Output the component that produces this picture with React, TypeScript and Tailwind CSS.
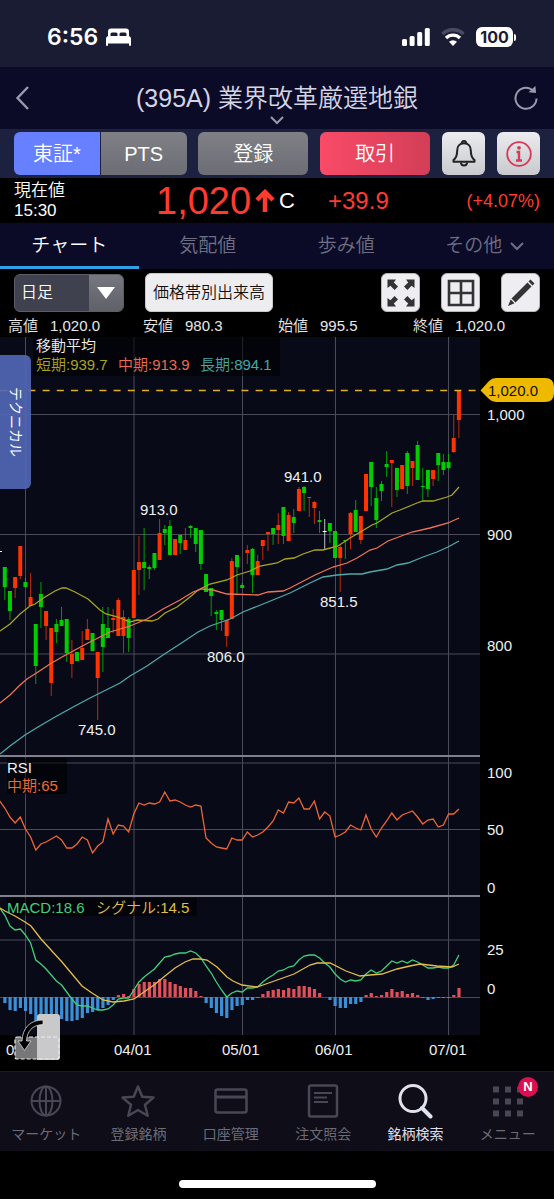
import { ReactNode } from 'react';

type Candle = [
  color: 'r' | 'g' | 'w',
  top: number,
  bottom: number,
  high: number,
  low: number,
];

const candleColors = { r: '#ff3300', g: '#00cc00', w: '#ffffff' };

const candles: Candle[] = [
  ['g', 567, 587, 567, 600],
  ['g', 591, 611, 591, 620],
  ['r', 577, 588, 577, 598],
  ['r', 546, 576, 546, 579],
  ['g', 582, 587, 578, 587],
  ['r', 597, 606, 573, 606],
  ['g', 624, 666, 624, 684],
  ['g', 594, 607, 582, 628],
  ['r', 611, 626, 611, 640],
  ['r', 628, 683, 628, 696],
  ['g', 624, 632, 619, 643],
  ['g', 620, 626, 607, 626],
  ['g', 619, 653, 619, 662],
  ['r', 654, 664, 640, 678],
  ['g', 652, 661, 652, 661],
  ['r', 648, 660, 631, 660],
  ['r', 629, 640, 619, 640],
  ['g', 633, 651, 633, 651],
  ['r', 652, 678, 652, 720],
  ['g', 624, 647, 607, 672],
  ['g', 628, 638, 607, 638],
  ['r', 618, 620, 609, 633],
  ['r', 600, 636, 598, 636],
  ['r', 617, 636, 610, 653],
  ['g', 619, 638, 617, 652],
  ['r', 570, 618, 570, 618],
  ['r', 562, 570, 536, 595],
  ['g', 562, 568, 528, 590],
  ['g', 567, 569, 565, 579],
  ['g', 553, 568, 553, 570],
  ['r', 533, 560, 519, 560],
  ['g', 529, 533, 525, 545],
  ['g', 526, 555, 520, 555],
  ['r', 539, 555, 539, 555],
  ['g', 535, 543, 535, 554],
  ['r', 540, 550, 528, 550],
  ['g', 526, 528, 525, 538],
  ['g', 528, 544, 528, 552],
  ['g', 530, 564, 530, 570],
  ['g', 574, 592, 574, 592],
  ['g', 588, 596, 588, 616],
  ['g', 612, 614, 610, 630],
  ['g', 610, 620, 610, 631],
  ['r', 620, 636, 620, 647],
  ['r', 561, 619, 558, 619],
  ['g', 555, 567, 555, 594],
  ['g', 585, 588, 583, 588],
  ['r', 550, 553, 545, 564],
  ['g', 549, 575, 548, 593],
  ['r', 561, 575, 555, 575],
  ['r', 540, 546, 540, 560],
  ['r', 532, 534, 532, 551],
  ['g', 528, 534, 528, 545],
  ['r', 525, 530, 513, 544],
  ['g', 507, 536, 507, 544],
  ['r', 515, 541, 512, 541],
  ['g', 517, 523, 509, 533],
  ['r', 489, 511, 487, 511],
  ['g', 487, 493, 486, 511],
  ['r', 497, 498, 497, 517],
  ['r', 502, 508, 501, 524],
  ['g', 520, 522, 511, 533],
  ['w', 531, 532, 519, 549],
  ['g', 523, 531, 523, 543],
  ['g', 531, 558, 531, 558],
  ['r', 547, 558, 545, 592],
  ['g', 540, 541, 540, 559],
  ['r', 513, 534, 512, 549],
  ['g', 510, 532, 500, 532],
  ['r', 516, 540, 516, 544],
  ['r', 474, 511, 474, 511],
  ['g', 462, 487, 462, 506],
  ['g', 498, 520, 487, 528],
  ['g', 484, 491, 481, 501],
  ['g', 464, 467, 451, 477],
  ['r', 460, 463, 460, 507],
  ['g', 468, 490, 468, 497],
  ['r', 465, 489, 465, 489],
  ['g', 453, 486, 451, 494],
  ['r', 461, 468, 461, 486],
  ['g', 445, 480, 441, 480],
  ['g', 486, 487, 468, 501],
  ['g', 470, 489, 470, 497],
  ['r', 470, 479, 470, 486],
  ['g', 453, 465, 453, 481],
  ['g', 462, 470, 454, 475],
  ['g', 462, 468, 454, 469],
  ['r', 438, 452, 415, 453],
  ['r', 390, 420, 390, 438],
];

// the first value of the two daily series lies one day left of the first candle
const rsi = [
  801, 808, 817, 823, 817, 829, 837, 850, 844, 842, 839, 836, 840, 848, 848,
  844, 837, 840, 853, 846, 842, 819, 834, 825, 826, 832, 814, 803, 805, 803,
  804, 802, 792, 801, 800, 802, 805, 807, 805, 806, 838, 843, 847, 848, 849,
  838, 840, 840, 832, 837, 835, 832, 827, 821, 810, 813, 802, 803, 798, 809,
  809, 801, 819, 812, 816, 837, 835, 832, 825, 828, 830, 815, 829, 837, 828,
  821, 813, 820, 815, 813, 811, 817, 824, 820, 819, 827, 825, 814, 814, 809,
];

const macd = [
  908, 915, 926, 930, 929, 935, 943, 960, 964, 969, 975, 981, 985, 992, 999,
  1005, 1006, 1006, 1008, 1010, 1010, 1009, 1005, 999, 998, 998, 990, 982, 977,
  973, 969, 963, 957, 956, 954, 953, 953, 951, 953, 958, 966, 973, 982, 990,
  997, 993, 991, 992, 988, 988, 987, 982, 978, 975, 971, 970, 967, 966, 960,
  956, 955, 955, 958, 963, 967, 974, 979, 982, 980, 981, 980, 974, 970, 973,
  971, 966, 961, 963, 961, 963, 960, 962, 965, 968, 968, 967, 968, 968, 965,
  955,
];

const histogram = [
  -6, -13, -14, -11, -14, -17, -24, -24, -24, -24, -23, -22, -24, -24, -23, -21,
  -16, -15, -13, -11, -8, -3, 2, 3, 1, 8, 13, 15, 15, 15, 18, 18, 15, 13, 11, 9,
  9, 6, 1, -6, -11, -16, -19, -21, -13, -9, -8, -3, -3, -1, 3, 6, 7, 8, 7, 9, 8,
  11, 11, 10, 8, 4, 0, -3, -9, -11, -11, -7, -7, -5, 2, 4, 1, 2, 5, 8, 5, 6, 3,
  4, 2, -1, -3, -2, -1, -1, -1, 2, 9,
];

const shortAverage =
  '0,631 10,624 20,614 30,606 35,604 45,597 55,591 62,588 66,588 75,592 88,599 100,610 106,614 118,617 130,622 137,620 152,621 158,619 165,613 177,607 190,597 198,590 210,584 227,580 237,575 250,571 260,566 277,563 285,559 294,558 303,554 315,550 323,550 338,546 350,538 362,531 372,525 377,523 392,513 400,510 417,503 423,501 433,501 447,497 452,495 459,487';
const middleAverage =
  '0,703 10,695 20,685 27,679 38,672 50,664 62,657 75,650 88,643 100,637 110,632 120,629 130,626 147,619 163,609 180,600 193,592 202,589 213,590 227,594 258,595 268,592 283,591 290,588 315,575 333,567 347,563 357,558 370,550 377,548 388,541 412,532 430,528 448,523 459,518';
const longAverage =
  '0,754 10,746 25,735 38,727 55,717 75,706 90,698 104,691 120,683 130,676 147,666 163,655 183,642 198,632 210,626 230,619 243,612 263,604 290,593 310,583 323,577 337,575 350,574 362,574 370,572 387,569 397,565 408,563 423,557 437,552 448,547 459,541';
const signal =
  '0,908 5,911 15,916 25,922 31,926 41,939 51,950 62,962 72,974 82,986 92,993 103,1000 113,1002 124,1001 134,999 144,992 154,985 165,976 175,968 185,962 193,959 200,959 207,960 217,967 227,977 233,981 242,985 257,987 263,985 280,979 294,974 310,965 317,963 330,963 346,971 360,976 370,975 382,974 397,969 410,966 420,964 437,966 452,967 459,964';

const candleX = (index: number) => 4.8 + index * 5.16;
const toPoints = (values: number[]) =>
  values.map((y, index) => `${candleX(index - 1)},${y}`).join(' ');

const StatusBar = () => (
  <div className="flex items-center justify-between h-[67px] pt-[7px] pl-[47px] pr-[38px] bg-[#191c33] text-white">
    <div className="flex items-center gap-2">
      <span className="font-['Inter',sans-serif] font-semibold text-[23px] leading-7">
        6:56
      </span>
      <svg width="25" height="18" viewBox="0 0 25 18" fill="currentColor">
        <path d="M2 8V3.5A3 3 0 0 1 5 .5h15a3 3 0 0 1 3 3V8h-2.500V6A1.500 1.500 0 0 0 19 4.500h-4A1.500 1.500 0 0 0 13.500 6v2h-2V6A1.500 1.500 0 0 0 10 4.500H6A1.500 1.500 0 0 0 4.500 6v2Z" />
        <path d="M0 11a3 3 0 0 1 3-3h19a3 3 0 0 1 3 3v6a1 1 0 0 1-2 0v-1.500H2V17a1 1 0 0 1-2 0Z" />
      </svg>
    </div>
    <div className="flex items-center gap-[11px]">
      <svg width="28" height="18" viewBox="0 0 28 18" fill="currentColor">
        <rect x="0" y="11" width="5" height="7" rx="1.500" />
        <rect x="7.600" y="8" width="5" height="10" rx="1.500" />
        <rect x="15.200" y="4" width="5" height="14" rx="1.500" />
        <rect x="22.800" y="0" width="5" height="18" rx="1.500" />
      </svg>
      <svg width="24" height="18" viewBox="0 0 24 18" fill="none">
        <path d="M1.500 6a15 15 0 0 1 21 0" stroke="#474a60" strokeWidth="3.600" />
        <path d="M5 10a10 10 0 0 1 14 0" stroke="#fff" strokeWidth="3.400" />
        <path d="M12 18 8 13.800a5.800 5.800 0 0 1 8 0Z" fill="#fff" />
      </svg>
      <div className="flex items-center gap-px">
        <span className="w-[37px] h-5 rounded-md bg-white text-center text-[#191c33] font-['Inter',sans-serif] font-bold text-[16px] leading-5">
          100
        </span>
        <span className="w-0.5 h-[7px] rounded-r-sm bg-white" />
      </div>
    </div>
  </div>
);

const Header = () => (
  <header className="flex items-start justify-between h-[62px] px-[15px] bg-[#0b0b28] text-[#9a9aac]">
    <button type="button" aria-label="戻る" className="w-[26px] pt-[18px]">
      <svg width="15" height="26" viewBox="0 0 15 26" fill="none">
        <path d="M13 2 2.500 13 13 24" stroke="currentColor" strokeWidth="2.400" />
      </svg>
    </button>
    <button type="button" className="flex flex-col items-center pt-[13px]">
      <span className="text-[25px] leading-9 font-[350] text-[#d4d4e4]">
        (395A) 業界改革厳選地銀
      </span>
      <svg width="14" height="9" viewBox="0 0 14 9" fill="none">
        <path d="m1 1 6 6 6-6" stroke="currentColor" strokeWidth="2" />
      </svg>
    </button>
    <button type="button" aria-label="更新" className="pt-[18px]">
      <svg width="26" height="26" viewBox="0 0 26 26" fill="none">
        <path
          d="M23.500 13.500A10.500 10.500 0 1 1 17 3.600l3 1.800"
          stroke="currentColor"
          strokeWidth="2"
        />
        <path d="m22.500 1 .5 7-7.500-.8Z" fill="currentColor" />
      </svg>
    </button>
  </header>
);

const Actions = () => (
  <div className="flex gap-3 h-[49px] px-[14px] py-[3px] bg-[#1c2140] text-white text-[20px] leading-none font-[350]">
    <div className="flex flex-[11] gap-px">
      <button type="button" className="flex-1 rounded-l-md bg-[#6680ff]">
        東証*
      </button>
      <button
        type="button"
        className="flex-1 rounded-r-md bg-linear-to-b from-[#808086] to-[#6c6d75]"
      >
        PTS
      </button>
    </div>
    <button
      type="button"
      className="flex-[7] rounded-md bg-linear-to-b from-[#808086] to-[#6c6d75]"
    >
      登録
    </button>
    <button
      type="button"
      className="flex-[7] rounded-md bg-linear-to-r from-[#f94b68] to-[#d33e57]"
    >
      取引
    </button>
    <button
      type="button"
      aria-label="アラート"
      className="flex items-center justify-center w-[43px] rounded-md bg-linear-to-b from-[#ececf0] to-[#c9cacd]"
    >
      <svg width="24" height="27" viewBox="0 0 24 27" fill="none">
        <path
          d="M12 3.200c-4.500 0-6.800 3.200-6.800 7.300 0 5.500-1 7.500-3.700 9.600v1.700h21v-1.700c-2.700-2.100-3.700-4.100-3.700-9.600 0-4.100-2.300-7.300-6.800-7.300Z"
          stroke="#222"
          strokeWidth="2"
          strokeLinejoin="round"
        />
        <path d="M10 3a2 2 0 0 1 4 0M9 22.500a3 3 0 0 0 6 0" stroke="#222" strokeWidth="2" />
      </svg>
    </button>
    <button
      type="button"
      aria-label="情報"
      className="flex items-center justify-center w-[43px] rounded-md bg-linear-to-b from-[#ececf0] to-[#c9cacd]"
    >
      <svg width="26" height="26" viewBox="0 0 26 26" fill="none">
        <circle cx="13" cy="13" r="11.800" stroke="#d63a57" strokeWidth="1.800" />
        <circle cx="13" cy="6.800" r="1.900" fill="#d63a57" />
        <path d="M10.500 11H13v8.500M10 19.500h6" stroke="#d63a57" strokeWidth="2.400" />
      </svg>
    </button>
  </div>
);

const Price = () => (
  <div className="grid grid-cols-[142px_172px_1fr_auto] items-center h-[45px] px-[14px] bg-black text-[#ff3b30]">
    <div className="text-white text-[17px] leading-5 font-[350]">
      <p>現在値</p>
      <p>15:30</p>
    </div>
    <div className="flex items-center gap-1">
      <span className="text-[38px] leading-none">1,020</span>
      <svg width="20" height="24" viewBox="0 0 20 24" fill="none">
        <path d="M10 23V4M2 11l8-8 8 8" stroke="currentColor" strokeWidth="4.500" />
      </svg>
      <span className="text-[22px] leading-none text-white">C</span>
    </div>
    <span className="text-[24px] leading-none">+39.9</span>
    <span className="text-[18px] leading-none">(+4.07%)</span>
  </div>
);

const tabs = ['チャート', '気配値', '歩み値', 'その他'];

const Tabs = () => (
  <nav className="grid grid-cols-4 h-[46px] bg-[#0b0b28] text-[19px] font-[350]">
    {tabs.map((tab, index) => (
      <button
        key={tab}
        type="button"
        className={`flex items-center justify-center gap-2 pt-1 border-b-3 ${
          index === 0
            ? 'border-[#2f9fe6] text-white'
            : 'border-transparent text-[#6f6f84]'
        }`}
      >
        {tab}
        {index === 3 && (
          <svg width="14" height="9" viewBox="0 0 14 9" fill="none">
            <path d="m1 1 6 6 6-6" stroke="currentColor" strokeWidth="2" />
          </svg>
        )}
      </button>
    ))}
  </nav>
);

const ToolButton = ({
  label,
  children,
}: {
  label: string;
  children: ReactNode;
}) => (
  <button
    type="button"
    aria-label={label}
    className="flex items-center justify-center w-[39px] h-[39px] rounded-md border border-[#b5b5bb] bg-[#ededf2]"
  >
    <svg width="28" height="28" viewBox="0 0 28 28" fill="none">
      {children}
    </svg>
  </button>
);

const Toolbar = () => (
  <div className="flex items-center h-[47px] px-[14px] pt-1 pb-1">
    <div className="relative w-[110px]">
      <select
        aria-label="足種"
        defaultValue="日足"
        className="w-full h-[38px] pl-1.5 rounded-md border border-[#5c5d68] bg-[#40414f] text-[16px] font-[350] text-white appearance-none"
      >
        <option>日足</option>
        <option>週足</option>
        <option>月足</option>
      </select>
      <span className="absolute inset-y-px right-px flex items-center justify-center w-[34px] rounded-r-[5px] bg-linear-to-b from-[#77787f] to-[#5f6068] pointer-events-none">
        <svg width="18" height="12" viewBox="0 0 18 12">
          <path d="M0 0h18L9 12Z" fill="#fff" />
        </svg>
      </span>
    </div>
    <button
      type="button"
      className="flex items-center justify-center w-[128px] h-[39px] ml-[21px] rounded-md border border-[#c8c8cc] bg-[#ededf0] text-[16px] font-[350] text-[#111] whitespace-nowrap"
    >
      価格帯別出来高
    </button>
    <div className="flex gap-[21px] ml-auto">
      <ToolButton label="全画面">
        <g fill="#333">
          {[0, 90, 180, 270].map((angle) => (
            <path
              key={angle}
              transform={`rotate(${angle} 14 14)`}
              d="M.5.5h8.500L6.800 3.400l4.200 4.200-3.400 3.400-4.200-4.200L.5 9Z"
            />
          ))}
        </g>
      </ToolButton>
      <ToolButton label="画面分割">
        <path
          d="M2 2h24v24H2ZM14 2v24M2 14h24"
          stroke="#333"
          strokeWidth="2.600"
        />
      </ToolButton>
      <ToolButton label="描画">
        <path
          d="m20.500 3.500 4 4L8.500 23.500l-4-4ZM21.500 2.500l2-2 4 4-2 2ZM3.700 20.500l3.800 3.800L1 27Z"
          fill="#333"
        />
      </ToolButton>
    </div>
  </div>
);

const prices = [
  { label: '高値', value: '1,020.0' },
  { label: '安値', value: '980.3' },
  { label: '始値', value: '995.5' },
  { label: '終値', value: '1,020.0' },
];

const DayPrices = () => (
  <dl className="grid grid-cols-4 h-[21px] pl-2 pr-1.5 text-[15px] leading-5 font-[350] text-[#e8e8e8]">
    {prices.map(({ label, value }) => (
      <div key={label} className="flex gap-3 whitespace-nowrap">
        <dt>{label}</dt>
        <dd>{value}</dd>
      </div>
    ))}
  </dl>
);

const axisLabels: [number, number, string][] = [
  [487, 420, '1,000'],
  [487, 540, '900'],
  [487, 651, '800'],
  [487, 778, '100'],
  [487, 835, '50'],
  [487, 893, '0'],
  [487, 955, '25'],
  [487, 994, '0'],
  [114, 1055, '04/01'],
  [222, 1055, '05/01'],
  [315, 1055, '06/01'],
  [429, 1055, '07/01'],
  [6, 1055, '02/01'],
  [140, 515, '913.0'],
  [284, 482, '941.0'],
  [320, 607, '851.5'],
  [207, 662, '806.0'],
  [78, 735, '745.0'],
];

const Chart = () => (
  <div className="relative">
    <svg
      viewBox="0 337 554 734"
      className="block w-full h-auto text-[15px] font-[350]"
      fill="none"
    >
      <rect x="0" y="337" width="480" height="698" fill="#080a18" />

      <path
        d="M25.500 337V1035M134 337V1035M242.500 337V1035M335.500 337V1035M448.500 337V1035M0 414.500H480M0 534.500H480M0 654H480M0 763H480M0 829.500H480M0 940H480M0 997.500H480"
        stroke="#4a4b57"
      />
      <path d="M0 756H480M0 896H480" stroke="#7f808c" strokeWidth="2" />

      <g fill="#000" fillOpacity="0.550">
        <rect x="33" y="337" width="247" height="39" />
        <rect x="7" y="758" width="60" height="36" />
        <rect x="7" y="898" width="190" height="18" />
      </g>

      {candles.map(([color, top, bottom, high, low], index) => (
        <g key={index} fill={candleColors[color]}>
          <rect
            x={candleX(index) - 0.5}
            y={high}
            width="1"
            height={low - high}
            opacity="0.750"
          />
          <rect
            x={candleX(index) - 2}
            y={top}
            width="4"
            height={bottom - top}
          />
        </g>
      ))}
      <path d="M0 551.500h2" stroke="#fff" />

      <polyline points={shortAverage} stroke="#a9a520" strokeWidth="1.300" />
      <polyline points={middleAverage} stroke="#ee7357" strokeWidth="1.300" />
      <polyline points={longAverage} stroke="#4fa9a8" strokeWidth="1.300" />
      <path
        d="M0 390.500H480"
        stroke="#e0b020"
        strokeWidth="1.500"
        strokeDasharray="7 7.200"
      />

      <polyline points={toPoints(rsi)} stroke="#ee6633" strokeWidth="1.300" />

      {histogram.map((value, index) => (
        <rect
          key={index}
          x={candleX(index) - 1.5}
          y={value > 0 ? 997 - value : 997}
          width="3.200"
          height={Math.abs(value)}
          fill={value > 0 ? '#e0505a' : '#3a8fd6'}
        />
      ))}
      <polyline points={toPoints(macd)} stroke="#3fd07c" strokeWidth="1.300" />
      <polyline points={signal} stroke="#e3bd48" strokeWidth="1.300" />

      <g fill="#f0f0f0">
        {axisLabels.map(([x, y, label]) => (
          <text key={`${x}-${y}`} x={x} y={y}>
            {label}
          </text>
        ))}
        <text x="36" y="351">
          移動平均
        </text>
        <text x="7" y="773">
          RSI
        </text>
      </g>
      <text x="36" y="370" fill="#a9a520">
        短期:939.7
      </text>
      <text x="118" y="370" fill="#ee6a52">
        中期:913.9
      </text>
      <text x="200" y="370" fill="#45a8a2">
        長期:894.1
      </text>
      <text x="7" y="791" fill="#f06a3c">
        中期:65
      </text>
      <text x="7" y="913" fill="#3fd07c">
        MACD:18.6
      </text>
      <text x="96" y="913" fill="#e3bd48">
        シグナル:14.5
      </text>

      <path
        d="M480.500 390.500 489 381q3-3 7-3h49q9 0 9 9v6q0 9-9 9h-49q-4 0-7-3Z"
        fill="#efb900"
      />
      <text x="488" y="396" fill="#111">
        1,020.0
      </text>
    </svg>

    <button
      type="button"
      className="absolute left-0 top-[18px] flex items-center justify-center w-[31px] h-[134px] rounded-r-md bg-[#5367b8]/90 text-white text-[14px] leading-none [writing-mode:vertical-rl] [text-orientation:sideways]"
    >
      テクニカル
    </button>
    <button
      type="button"
      aria-label="表示切替"
      className="absolute left-[14px] bottom-[11px]"
    >
      <svg width="46" height="46" viewBox="0 0 46 46" fill="none">
        <path d="M1 23h22v22H4a3 3 0 0 1-3-3Z" fill="#77777a" />
        <path d="M23 3a3 3 0 0 1 3-3h17a3 3 0 0 1 3 3v40a3 3 0 0 1-3 3H23Z" fill="#c9c9cc" />
        <rect
          x="1"
          y="23"
          width="44"
          height="22"
          rx="2"
          stroke="#eee"
          strokeWidth="1.200"
          strokeDasharray="4 2"
        />
        <path
          d="M29 6C16 6 8.500 14 8 27H4l6.500 9.500L17 27h-4.500C13 17.500 18 11 29 10.500Z"
          fill="#000"
          stroke="#ddd"
          strokeWidth="0.800"
        />
      </svg>
    </button>
  </div>
);

const navItems: { label: string; icon: ReactNode }[] = [
  {
    label: 'マーケット',
    icon: (
      <>
        <circle cx="18" cy="18" r="14.500" />
        <ellipse cx="18" cy="18" rx="6.500" ry="14.500" />
        <path d="M18 3.500v29M3.500 18h29" />
      </>
    ),
  },
  {
    label: '登録銘柄',
    icon: (
      <path
        d="m18 3.500 4.300 10.200 11.200.9-8.500 7.200 2.700 11L18 27l-9.700 5.800 2.700-11-8.500-7.200 11.200-.9Z"
        strokeWidth="2.500"
        strokeLinejoin="round"
      />
    ),
  },
  {
    label: '口座管理',
    icon: (
      <>
        <rect x="2.500" y="6.500" width="31" height="23" rx="2" strokeWidth="2.500" />
        <path d="M2.500 14h31" strokeWidth="3" />
      </>
    ),
  },
  {
    label: '注文照会',
    icon: (
      <>
        <rect x="4" y="2.500" width="28" height="31" rx="2" strokeWidth="2.500" />
        <path d="M9 10h18M9 14.500h13M9 19h14" strokeWidth="1.800" />
      </>
    ),
  },
  {
    label: '銘柄検索',
    icon: (
      <>
        <circle cx="16" cy="15.500" r="13" strokeWidth="3" />
        <path d="m25 25 8.500 8.500" strokeWidth="4" strokeLinecap="round" />
      </>
    ),
  },
  {
    label: 'メニュー',
    icon: (
      <path
        d="M3 6.500h30M3 18.500h30M3 30.500h30"
        strokeWidth="6"
        strokeDasharray="6 6"
      />
    ),
  },
];

const BottomNav = () => (
  <nav className="grid grid-cols-6 h-20 bg-[#0e0d18] border-t border-[#1c1a22]">
    {navItems.map(({ label, icon }) => {
      const active = label === '銘柄検索';
      return (
        <a
          key={label}
          href="#"
          className={`relative flex flex-col items-center pt-[11px] text-[14px] leading-5 whitespace-nowrap ${
            active ? 'text-[#dedee8]' : 'text-[#6c6b77]'
          }`}
        >
          <svg
            width="36"
            height="36"
            viewBox="0 0 36 36"
            fill="none"
            stroke={active ? '#e2e1ee' : '#484753'}
            strokeWidth="2"
          >
            {icon}
          </svg>
          <span className="pt-[5px]">{label}</span>
          {label === 'メニュー' && (
            <span className="absolute top-[5px] right-4 w-5 h-5 rounded-full bg-[#dc1050] text-center text-white font-bold text-[13px] leading-5">
              N
            </span>
          )}
        </a>
      );
    })}
  </nav>
);

export default function App() {
  return (
    <div className="min-h-screen bg-black font-['Liberation_Sans','Noto_Sans_CJK_JP',sans-serif]">
      <StatusBar />
      <Header />
      <Actions />
      <Price />
      <Tabs />
      <Toolbar />
      <DayPrices />
      <Chart />
      <BottomNav />
      <div className="flex justify-center h-12 pt-[29px]">
        <span className="w-[197px] h-2 rounded-full bg-white" />
      </div>
    </div>
  );
}
